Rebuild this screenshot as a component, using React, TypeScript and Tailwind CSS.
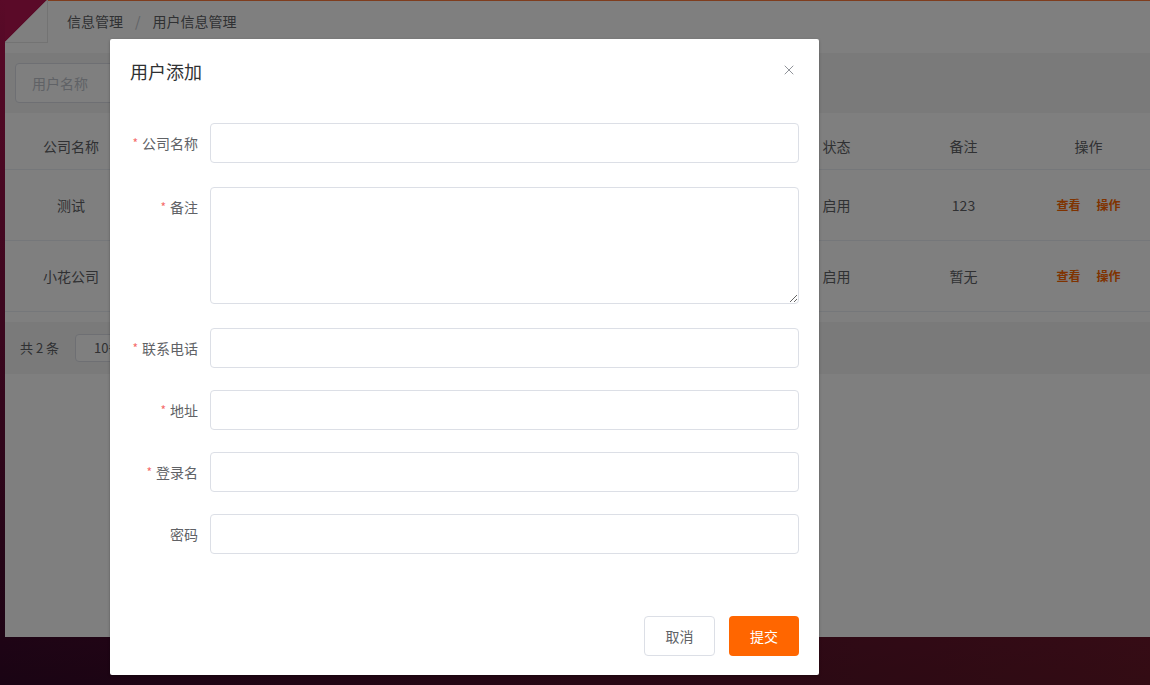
import { X } from "lucide-react";

const rows = [
  { name: "测试", phone: "13800000000", addr: "北京市", login: "test", status: "启用", note: "123" },
  { name: "小花公司", phone: "13900000000", addr: "上海市", login: "xiaohua", status: "启用", note: "暂无" },
];

const fields = [
  { label: "公司名称", required: true, kind: "input", gap: "mb-6" },
  { label: "备注", required: true, kind: "textarea", gap: "mb-6" },
  { label: "联系电话", required: true, kind: "input", gap: "mb-[22px]" },
  { label: "地址", required: true, kind: "input", gap: "mb-[22px]" },
  { label: "登录名", required: true, kind: "input", gap: "mb-[22px]" },
  { label: "密码", required: false, kind: "input", gap: "" },
];

function PageBehind() {
  return (
    <div className="relative ml-[5px] flex h-[637px] flex-col border-t border-[#ff7a3c] bg-white">
      {/* folded corner */}
      <svg className="absolute -top-px left-0" width="44" height="44" viewBox="0 0 44 44">
        <polygon points="0,0 42,0 0,42" fill="#b41450" />
        <polygon points="42,0 42,42 0,42" fill="#ffffff" />
        <line x1="42.5" y1="0" x2="42.5" y2="43" stroke="#e6e6e6" />
        <line x1="0" y1="42.5" x2="43" y2="42.5" stroke="#e6e6e6" />
      </svg>

      <header className="flex h-[52px] items-center pb-[12px] pl-[62px] text-[14px]">
        <span className="text-[#606266]">信息管理</span>
        <span className="mx-[12px] text-[#c0c4cc]">/</span>
        <span className="text-[#606266]">用户信息管理</span>
      </header>

      <div className="bg-[#f5f5f5] px-[10px] pb-[10px] pt-[10px]">
        <div className="flex h-10 w-[260px] items-center rounded border border-[#dcdfe6] bg-white pl-4 text-[14px] text-[#c0c4cc]">
          用户名称
        </div>
      </div>

      <div className="bg-white py-[10px] text-[14px] text-[#606266]">
        <div className="grid h-[47px] grid-cols-[132px_1fr_127px_127px_123px] items-center border-b border-[#ebeef5]">
          <div className="text-center">公司名称</div>
          <div className="grid grid-cols-3 text-center">
            <span>联系电话</span>
            <span>地址</span>
            <span>登录名</span>
          </div>
          <div className="text-center">状态</div>
          <div className="text-center">备注</div>
          <div className="text-center">操作</div>
        </div>
        {rows.map((r) => (
          <div
            key={r.name}
            className="grid h-[71px] grid-cols-[132px_1fr_127px_127px_123px] items-center border-b border-[#ebeef5]"
          >
            <div className="text-center">{r.name}</div>
            <div className="grid grid-cols-3 text-center">
              <span>{r.phone}</span>
              <span>{r.addr}</span>
              <span>{r.login}</span>
            </div>
            <div className="text-center">{r.status}</div>
            <div className="text-center">{r.note}</div>
            <div className="flex justify-center gap-4 text-[12px] font-semibold text-[#ff6600]">
              <span>查看</span>
              <span>操作</span>
            </div>
          </div>
        ))}
      </div>

      <div className="flex h-[52px] items-center gap-4 bg-[#f5f5f5] pl-[15px] text-[13px] text-[#606266]">
        <span>共 2 条</span>
        <div className="flex h-[28px] w-[100px] items-center rounded border border-[#dcdfe6] bg-white pl-[18px]">
          10条/页
        </div>
      </div>

      <div className="flex-1 bg-white" />
    </div>
  );
}

function Field({ label, required, kind, gap }: { label: string; required: boolean; kind: string; gap: string }) {
  return (
    <div className={`flex ${gap}`}>
      <label className="flex h-10 w-[80px] shrink-0 items-center justify-end pr-3 text-[14px] text-[#606266]">
        {required && <span className="mr-1 text-[12px] text-[#f56c6c]">*</span>}
        {label}
      </label>
      {kind === "textarea" ? (
        <textarea className="h-[117px] flex-1 resize-y rounded border border-[#dcdfe6] px-[15px] py-[5px] outline-none" />
      ) : (
        <input className="h-10 flex-1 rounded border border-[#dcdfe6] px-[15px] outline-none" />
      )}
    </div>
  );
}

export default function App() {
  return (
    <div className="relative h-[685px] w-[1150px] overflow-hidden bg-[linear-gradient(to_bottom,#b41450,rgba(52,8,40,0)),linear-gradient(to_right,#340828,#661828)] font-['Noto_Sans_CJK_SC',sans-serif]">
      <PageBehind />

      <div className="absolute inset-0 bg-black/50" />

      <div className="absolute left-[110px] top-[39px] flex h-[636px] w-[709px] flex-col rounded-[2px] bg-white shadow-[0_1px_3px_rgba(0,0,0,0.3)]">
        <div className="relative px-5 pb-[10px] pt-5">
          <h2 className="text-[18px] leading-6 text-[#303133]">用户添加</h2>
          <button className="absolute right-[22px] top-[23px] text-[#909399]">
            <X size={16} strokeWidth={1.5} />
          </button>
        </div>

        <form className="px-5 pb-[30px] pt-[30px]">
          {fields.map((f) => (
            <Field key={f.label} {...f} />
          ))}
        </form>

        <div className="mt-auto flex justify-end gap-[14px] px-5 pb-[19px] pt-[10px]">
          <button className="h-10 w-[71px] rounded border border-[#dcdfe6] bg-white text-[14px] text-[#606266]">
            取消
          </button>
          <button className="h-10 w-[70px] rounded bg-[#ff6600] text-[14px] text-white">提交</button>
        </div>
      </div>
    </div>
  );
}
